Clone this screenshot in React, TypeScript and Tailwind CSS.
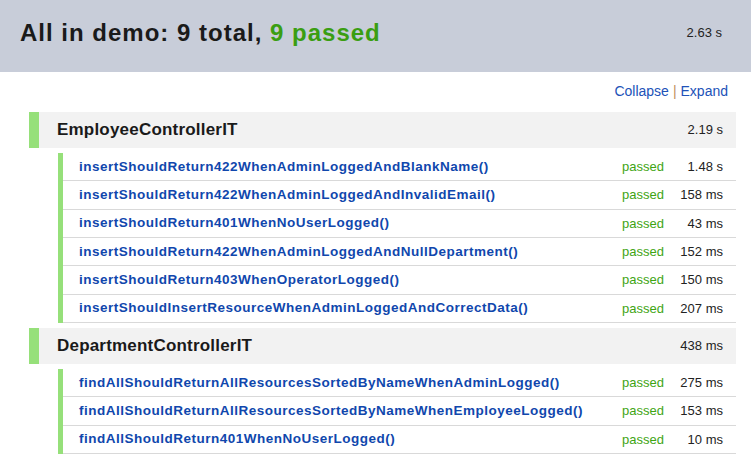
const suites = [
  {
    name: 'EmployeeControllerIT',
    time: '2.19 s',
    tests: [
      { name: 'insertShouldReturn422WhenAdminLoggedAndBlankName()', time: '1.48 s' },
      { name: 'insertShouldReturn422WhenAdminLoggedAndInvalidEmail()', time: '158 ms' },
      { name: 'insertShouldReturn401WhenNoUserLogged()', time: '43 ms' },
      { name: 'insertShouldReturn422WhenAdminLoggedAndNullDepartment()', time: '152 ms' },
      { name: 'insertShouldReturn403WhenOperatorLogged()', time: '150 ms' },
      { name: 'insertShouldInsertResourceWhenAdminLoggedAndCorrectData()', time: '207 ms' },
    ],
  },
  {
    name: 'DepartmentControllerIT',
    time: '438 ms',
    tests: [
      { name: 'findAllShouldReturnAllResourcesSortedByNameWhenAdminLogged()', time: '275 ms' },
      { name: 'findAllShouldReturnAllResourcesSortedByNameWhenEmployeeLogged()', time: '153 ms' },
      { name: 'findAllShouldReturn401WhenNoUserLogged()', time: '10 ms' },
    ],
  },
];

export default function App() {
  return (
    <div className="w-[751px] h-[468px] overflow-hidden bg-white font-['Liberation_Sans',Arial,sans-serif]">
      {/* Summary header */}
      <div className="h-[72px] bg-[#c8cdd9] flex items-center justify-between pl-5 pr-[29px] pb-[6px]">
        <h1 className="text-[24px] font-bold text-[#1a1a1a] tracking-[1px] whitespace-nowrap">
          All in demo: 9 total, <span className="text-[#3a9e12]">9 passed</span>
        </h1>
        <span className="text-[13px] text-[#222]">2.63 s</span>
      </div>

      <div className="flex justify-end pr-[23px] pt-[9px] h-[40px] text-[14px]">
        <a className="text-[#2152b8]">Collapse</a>
        <span className="text-[#c09060] mx-[4px]">|</span>
        <a className="text-[#2152b8]">Expand</a>
      </div>

      <div className="ml-[29px] mr-[15px]">
        {suites.map((s) => (
          <div key={s.name} className="mb-[5px]">
            <div className="h-[36px] bg-[#f2f2f2] flex items-center border-l-[10px] border-[#96e07a] pl-[18px] pr-[13px]">
              <span className="flex-1 text-[17px] font-bold text-[#1a1a1a] tracking-[0.2px]">{s.name}</span>
              <span className="text-[13px] text-[#222]">{s.time}</span>
            </div>
            <div className="ml-[29px] mt-[5px]">
              {s.tests.map((t) => (
                <div key={t.name} className="flex border-l-[5px] border-[#96e07a]">
                  <div className="flex-1 h-[28.33px] flex items-center border-b border-[#d9d9d9] pl-[16px] pr-[13px]">
                    <span className="flex-1 text-[13.5px] font-bold text-[#1047ad] tracking-[0.5px] whitespace-nowrap">{t.name}</span>
                    <span className="text-[13px] text-[#3fa514]">passed</span>
                    <span className="w-[59px] text-right text-[13px] text-[#222]">{t.time}</span>
                  </div>
                </div>
              ))}
            </div>
          </div>
        ))}
      </div>
    </div>
  );
}
